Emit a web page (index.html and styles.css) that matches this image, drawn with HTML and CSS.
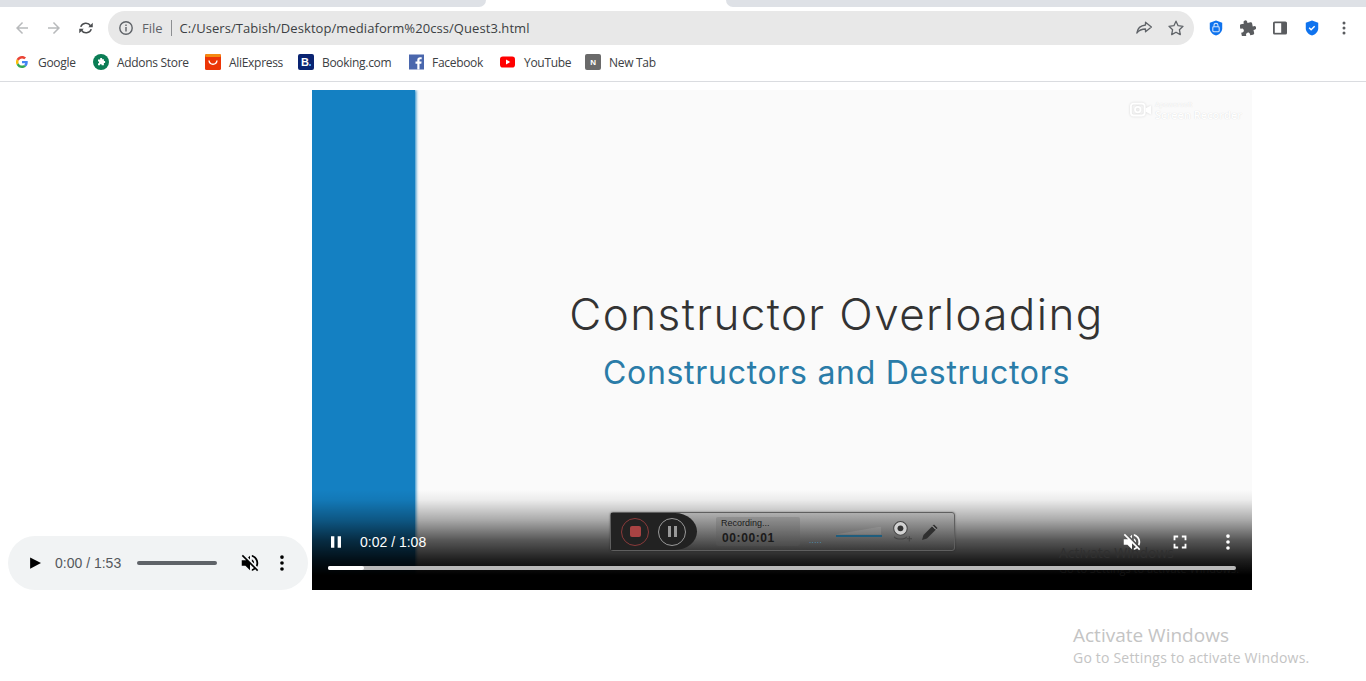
FILE: index.html
```html
<!DOCTYPE html>
<html lang="en-us">
<head>
  <meta charset="utf-8">
  <title>Quest3</title>
  <link rel="stylesheet" href="styles.css">
</head>
<body>
  <!-- browser chrome -->
  <div class="tabstrip">
    <div class="tab-side tab-left"></div>
    <div class="tab-active"></div>
    <div class="tab-side tab-right"></div>
  </div>

  <div class="toolbar">
    <svg class="nav-icon" viewBox="0 0 24 24"><path fill="#b8babc" d="M20 11H7.830l5.590-5.590L12 4l-8 8 8 8 1.410-1.410L7.830 13H20v-2z"/></svg>
    <svg class="nav-icon" viewBox="0 0 24 24"><path fill="#b8babc" d="M4 11h12.170l-5.590-5.590L12 4l8 8-8 8-1.410-1.410L16.170 13H4v-2z"/></svg>
    <svg class="nav-icon" viewBox="0 0 24 24"><path fill="none" stroke="#4a4c4f" stroke-width="2" d="M5 10.500A7.200 7.200 0 0 1 18 9M19 13.500A7.200 7.200 0 0 1 6 15"/><path fill="#4a4c4f" d="M21 5v6h-6zM3 19v-6h6z"/></svg>

    <div class="omnibox">
      <svg class="info-icon" viewBox="0 0 16 16"><circle cx="8" cy="8" r="6.200" fill="none" stroke="#5f6368" stroke-width="1.400"/><path fill="#5f6368" d="M7.300 7h1.400v4.400H7.300zM7.300 4.600h1.400V6H7.300z"/></svg>
      <span class="scheme">File</span>
      <span class="divider"></span>
      <span class="url">C:/Users/Tabish/Desktop/mediaform%20css/Quest3.html</span>
      <svg class="omni-icon" viewBox="0 0 18 18"><path fill="none" stroke="#5f6368" stroke-width="1.300" stroke-linejoin="round" d="M10.500 3.200 16.400 8l-5.900 4.800V10C6.600 10 4 11.200 1.800 14c.6-4 3.400-7.400 8.700-8z"/></svg>
      <svg class="omni-icon" viewBox="0 0 18 18"><path fill="none" stroke="#5f6368" stroke-width="1.300" stroke-linejoin="round" d="m9 2.200 2.100 4.500 4.900.6-3.600 3.400.9 4.900L9 13.200l-4.300 2.400.9-4.900L2 7.300l4.900-.6z"/></svg>
    </div>

    <div class="extensions">
      <svg class="ext-icon" viewBox="0 0 16 18"><path fill="#0f73ee" d="M8 .6 15 3v6.200c0 4-3 6.900-7 8.200-4-1.300-7-4.200-7-8.200V3z"/><rect x="4.400" y="7.600" width="7.200" height="5.600" rx="1" fill="none" stroke="#cfe3fc" stroke-width="1.200"/><path fill="none" stroke="#cfe3fc" stroke-width="1.200" d="M5.800 7.600V6a2.200 2.200 0 0 1 4.400 0v1.600"/></svg>
      <svg class="ext-icon" viewBox="1.500 1 21.500 21.500"><path fill="#5a5c5f" transform="rotate(-12 12 12)" d="M20.500 11H19V7c0-1.100-.9-2-2-2h-4V3.500a2.500 2.500 0 0 0-5 0V5H4c-1.100 0-1.990.9-1.990 2v3.800H3.500c1.490 0 2.700 1.210 2.700 2.700s-1.210 2.700-2.700 2.700H2V20c0 1.100.9 2 2 2h3.800v-1.500c0-1.490 1.210-2.700 2.700-2.700s2.700 1.210 2.700 2.700V22H17c1.100 0 2-.9 2-2v-4h1.500a2.500 2.500 0 0 0 0-5z"/></svg>
      <svg class="ext-icon" viewBox="0 0 16 16"><rect x="1" y="1.500" width="14" height="13" rx="1.600" fill="#5a5c5f"/><rect x="2.800" y="3.200" width="6.400" height="9.600" fill="#fff"/></svg>
      <svg class="ext-icon" viewBox="0 0 16 18"><path fill="#0f73ee" d="M8 .6 15 3v6.200c0 4-3 6.900-7 8.200-4-1.300-7-4.200-7-8.200V3z"/><path fill="none" stroke="#fff" stroke-width="1.600" d="m4.800 8.800 2.200 2.200 4-4"/></svg>
      <svg class="ext-icon" viewBox="0 0 16 16"><g fill="#5a5c5f"><circle cx="8" cy="3" r="1.500"/><circle cx="8" cy="8" r="1.500"/><circle cx="8" cy="13" r="1.500"/></g></svg>
    </div>
  </div>

  <div class="bookmarks">
    <a class="bookmark">
      <svg class="fav fav-google" viewBox="0 0 48 48"><path fill="#ea4335" d="M24 9.500c3.500 0 6.700 1.200 9.200 3.600l6.900-6.900C35.900 2.400 30.400 0 24 0 14.600 0 6.500 5.400 2.600 13.200l8 6.200C12.500 13.700 17.800 9.500 24 9.500z"/><path fill="#4285f4" d="M47 24.500c0-1.600-.1-3.100-.4-4.500H24v9h12.900c-.6 3-2.200 5.400-4.700 7.100l7.700 6C44.400 38 47 31.800 47 24.500z"/><path fill="#fbbc05" d="M10.500 28.600A14.500 14.500 0 0 1 10.500 19.400l-8-6.200a24 24 0 0 0 0 21.600z"/><path fill="#34a853" d="M24 48c6.500 0 11.900-2.100 15.900-5.900l-7.700-6c-2.100 1.400-4.900 2.300-8.200 2.300-6.200 0-11.500-4.200-13.400-9.800l-8 6.200C6.500 42.600 14.600 48 24 48z"/></svg>
      Google
    </a>
    <a class="bookmark">
      <svg class="fav" viewBox="0 0 16 16"><circle cx="8" cy="8" r="8" fill="#0b7d55"/><path fill="#fff" d="M7.200 4h1.900v1.300h1.800v1.800h1.200v1.800h-1.200v2.300H8.600v-1H7v1H5V9.300h1V7.500H5V5.500h2.200z"/></svg>
      Addons Store
    </a>
    <a class="bookmark">
      <svg class="fav" viewBox="0 0 16 16"><rect width="16" height="16" rx="1.500" fill="#ec3507"/><rect width="16" height="3" rx="1.500" fill="#f58a12"/><path fill="none" stroke="#fff" stroke-width="1.400" d="M4 6.500c.6 5 7.400 5 8 0"/></svg>
      AliExpress
    </a>
    <a class="bookmark">
      <span class="fav fav-booking">B<i class="fav-booking-dot"></i></span>
      Booking.com
    </a>
    <a class="bookmark">
      <svg class="fav" viewBox="0 0 16 16"><rect x="1" y=".5" width="15" height="15" fill="#4a67ad"/><path fill="#fff" d="M11.500 15.500V9.800h1.800l.3-2.200h-2.100V6.300c0-.6.200-1 1.100-1h1.100v-2c-.3 0-.9-.1-1.600-.1-1.700 0-2.800 1-2.800 2.800v1.600H7.500v2.200h1.800v5.700z"/></svg>
      Facebook
    </a>
    <a class="bookmark">
      <svg class="fav" viewBox="0 0 16 16"><rect y="2.500" width="15" height="11" rx="2.800" fill="#f00"/><path fill="#fff" d="M6 5.500v5L10.300 8z"/></svg>
      YouTube
    </a>
    <a class="bookmark">
      <span class="fav fav-newtab">N</span>
      New Tab
    </a>
  </div>

  <!-- page -->
  <main class="page">
    <div class="audio-player">
      <svg class="ctl-play" viewBox="0 0 24 24"><path fill="#000" d="M5.500 4.500v15L20 12z"/></svg>
      <span class="audio-time">0:00 / 1:53</span>
      <span class="audio-track"></span>
      <svg class="ctl-icon audio-mute" viewBox="0 0 24 24"><path fill="#000" d="M16.500 12c0-1.770-1.020-3.290-2.500-4.030v2.210l2.450 2.450c.03-.2.050-.41.050-.63zm2.500 0c0 .94-.2 1.820-.54 2.640l1.510 1.510C20.630 14.910 21 13.500 21 12c0-4.280-2.990-7.860-7-8.770v2.060c2.890.86 5 3.540 5 6.710zM4.270 3 3 4.270 7.730 9H3v6h4l5 5v-6.730l4.250 4.250c-.67.52-1.420.93-2.250 1.180v2.060c1.380-.31 2.630-.95 3.690-1.810L19.730 21 21 19.730l-9-9L4.270 3zM12 4 9.910 6.090 12 8.180V4z"/></svg>
      <svg class="ctl-icon audio-more" viewBox="0 0 24 24"><g fill="#000"><circle cx="12" cy="5.500" r="2"/><circle cx="12" cy="12" r="2"/><circle cx="12" cy="18.500" r="2"/></g></svg>
    </div>

    <div class="video-player">
      <div class="slide">
        <div class="slide-band"></div>
        <div class="slide-body">
          <h1 class="slide-title">Constructor Overloading</h1>
          <h2 class="slide-sub">Constructors and Destructors</h2>
        </div>
      </div>

      <div class="rec-mark">
        <svg class="rec-mark-icon" viewBox="0 0 24 20"><rect x="1" y="3" width="15" height="13" rx="3" fill="none" stroke="#fff" stroke-width="2"/><circle cx="8.500" cy="9.500" r="3" fill="none" stroke="#fff" stroke-width="2"/><path fill="#fff" d="m17 8 6-3v10l-6-3z"/></svg>
        <div class="rec-mark-text"><span>Apowersoft</span><b>Screen Recorder</b></div>
      </div>

      <div class="video-shade"></div>

      <div class="recorder">
        <div class="rec-buttons">
          <span class="rec-btn rec-stop"><i></i></span>
          <span class="rec-btn rec-pause"><i></i><i></i></span>
        </div>
        <div class="rec-status">
          <span class="rec-label">Recording...</span>
          <span class="rec-clock">00:00:01</span>
        </div>
        <span class="rec-dots">.....</span>
        <span class="rec-level"></span>
        <svg class="rec-cam" viewBox="0 0 20 22"><circle cx="9" cy="8" r="6.500" fill="#d2d2d2" stroke="#444" stroke-width="1"/><circle cx="9" cy="8" r="2.800" fill="#333"/><path fill="none" stroke="#444" d="M3 16c2 3 10 3 12 0"/><path stroke="#444" d="M15 18h5M17.500 15.500v5"/></svg>
        <svg class="rec-pen" viewBox="0 0 20 20"><path fill="#2f2f2f" d="M14 2.500 17.500 6 7 16.500 2 18l1.500-5z"/><path stroke="#ccc" d="m12.500 4 3.500 3.500"/></svg>
      </div>

      <div class="ghost-text"><span>Activate Windows</span><small>Go to Settings to activate Windows.</small></div>

      <div class="video-controls">
        <div class="video-row">
          <svg class="ctl-icon video-pause" viewBox="0 0 24 24"><path fill="#fff" d="M6 19h4V5H6zm8-14v14h4V5z"/></svg>
          <span class="video-time">0:02 / 1:08</span>
          <svg class="ctl-icon video-mute" viewBox="0 0 24 24"><path fill="#fff" d="M16.500 12c0-1.770-1.020-3.290-2.500-4.030v2.210l2.450 2.450c.03-.2.050-.41.050-.63zm2.500 0c0 .94-.2 1.820-.54 2.640l1.510 1.510C20.630 14.910 21 13.500 21 12c0-4.280-2.990-7.860-7-8.770v2.060c2.890.86 5 3.540 5 6.710zM4.270 3 3 4.270 7.730 9H3v6h4l5 5v-6.730l4.250 4.250c-.67.52-1.420.93-2.250 1.180v2.060c1.380-.31 2.630-.95 3.690-1.810L19.730 21 21 19.730l-9-9L4.270 3zM12 4 9.910 6.090 12 8.180V4z"/></svg>
          <svg class="ctl-icon video-full" viewBox="0 0 24 24"><path fill="#fff" d="M7 14H5v5h5v-2H7v-3zm-2-4h2V7h3V5H5v5zm12 7h-3v2h5v-5h-2v3zM14 5v2h3v3h2V5h-5z"/></svg>
          <svg class="ctl-icon video-more" viewBox="0 0 24 24"><g fill="#fff"><circle cx="12" cy="5.500" r="2"/><circle cx="12" cy="12" r="2"/><circle cx="12" cy="18.500" r="2"/></g></svg>
        </div>
        <div class="video-track"><span class="video-played" style="width:4%"></span></div>
      </div>
    </div>
  </main>

  <div class="watermark">
    <div class="watermark-title">Activate Windows</div>
    <div class="watermark-sub">Go to Settings to activate Windows.</div>
  </div>
</body>
</html>
```

FILE: styles.css
```css
* {
  box-sizing: border-box;
}

html, body {
  height: 100%;
}

body {
  margin: 0;
  background: #fff;
  overflow: hidden;
  position: relative;
  font-family: "Open Sans", "Liberation Sans", sans-serif;
}

/* tabs */
.tabstrip {
  display: flex;
  height: 7px;
  background: #fff;
}

.tab-side {
  background: #dee1e6;
}

.tab-left {
  width: 486px;
  border-bottom-right-radius: 8px;
}

.tab-active {
  width: 240px;
}

.tab-right {
  flex: 1;
  border-bottom-left-radius: 8px;
}

/* toolbar */
.toolbar {
  display: flex;
  align-items: center;
  height: 40px;
  padding-left: 8px;
}

.nav-icon {
  width: 18px;
  height: 18px;
  margin: 2px 6px 0 5px;
  flex: none;
}

.nav-icon + .nav-icon {
  margin-left: 8px;
}

.nav-icon + .nav-icon + .nav-icon {
  margin-right: 0;
}

.omnibox {
  display: flex;
  align-items: center;
  flex: none;
  width: 1086px;
  height: 34px;
  margin-left: 13px;
  margin-top: 2px;
  padding: 0 9px 0 10px;
  border-radius: 17px;
  background: #e8e8e8;
  font-size: 13px;
}

.info-icon {
  width: 16px;
  height: 16px;
}

.scheme {
  margin-left: 8px;
  color: #5f6368;
}

.divider {
  width: 1px;
  height: 16px;
  margin: 0 8px;
  background: #8d8f92;
}

.url {
  flex: 1;
  color: #3c3f43;
  letter-spacing: .07px;
}

.omni-icon {
  width: 18px;
  height: 18px;
  margin-left: 14px;
}

.extensions {
  display: flex;
  align-items: center;
  margin-left: 14px;
  margin-top: 2px;
}

.ext-icon {
  flex: none;
  width: 16px;
  height: 16px;
  margin-right: 16px;
}

/* bookmarks */
.bookmarks {
  display: flex;
  align-items: center;
  height: 35px;
  padding: 0 0 4px 14px;
  border-bottom: 1px solid #dadce0;
}

.bookmark {
  display: flex;
  align-items: center;
  gap: 8px;
  font-size: 12px;
  letter-spacing: -.3px;
  white-space: nowrap;
  color: #3c4043;
}

.bookmark:nth-child(1) { width: 79px; }
.bookmark:nth-child(2) { width: 112px; }
.bookmark:nth-child(3) { width: 93px; }
.bookmark:nth-child(4) { width: 110px; }
.bookmark:nth-child(5) { width: 92px; }
.bookmark:nth-child(6) { width: 85px; }

.fav {
  width: 16px;
  height: 16px;
  flex: none;
}

.fav-google {
  padding: 2px;
}

.fav-booking {
  position: relative;
  display: flex;
  align-items: center;
  padding-left: 3px;
  border-radius: 2px;
  background: #0a2472;
  color: #fff;
  font: bold 11px "Liberation Sans", sans-serif;
}

.fav-booking-dot {
  position: absolute;
  right: 3px;
  bottom: 4px;
  width: 2px;
  height: 2px;
  background: #4aa3f0;
}

.fav-newtab {
  display: flex;
  align-items: center;
  justify-content: center;
  border-radius: 2px;
  background: #6a6a6a;
  color: #fff;
  font: bold 8px "Liberation Sans", sans-serif;
}

/* page */
.page {
  display: flex;
  align-items: flex-end;
  gap: 4px;
  padding: 8px;
}

.audio-player {
  display: flex;
  align-items: center;
  width: 300px;
  height: 54px;
  padding-left: 18px;
  border-radius: 27px;
  background: #f1f3f4;
  font: 14px "Liberation Sans", sans-serif;
  color: #55585c;
}

.ctl-play {
  width: 18px;
  height: 18px;
}

.audio-time {
  margin-left: 11px;
  width: 66px;
  white-space: nowrap;
}

.audio-track {
  width: 80px;
  height: 4px;
  margin-left: 16px;
  border-radius: 2px;
  background: #5f6368;
}

.ctl-icon {
  width: 22px;
  height: 22px;
  flex: none;
}

.audio-mute {
  margin-left: 22px;
}

.audio-more {
  margin-left: 10px;
}

.video-player {
  position: relative;
  width: 940px;
  height: 500px;
  overflow: hidden;
  background: #000;
}

.slide {
  display: flex;
  height: 100%;
  background: #fafafa;
}

.slide-band {
  width: 103px;
  background: #1480c2;
  box-shadow: 1px 0 3px #1480c2;
}

.slide-body {
  flex: 1;
  padding: 199px 0 0 6px;
  text-align: center;
}

.slide-title {
  margin: 0;
  font: 300 44px/50px Inter, sans-serif;
  letter-spacing: 1.400px;
  color: #333;
  white-space: nowrap;
}

.slide-sub {
  margin: 14px 0 0;
  font: 400 32px/40px Inter, sans-serif;
  letter-spacing: .7px;
  color: #2a7ca8;
  white-space: nowrap;
}

.rec-mark {
  position: absolute;
  top: 10px;
  right: 10px;
  display: flex;
  align-items: center;
  gap: 3px;
  color: #fff;
  text-shadow: 0 0 1px #d5d5d5;
}

.rec-mark-icon {
  width: 22px;
  height: 20px;
  filter: drop-shadow(0 0 1px #d5d5d5);
}

.rec-mark-text {
  display: flex;
  flex-direction: column;
  font-size: 7px;
  line-height: 8px;
}

.rec-mark-text b {
  font-size: 11px;
  line-height: 11px;
  font-weight: 600;
}

.video-shade {
  position: absolute;
  left: 0;
  right: 0;
  bottom: 0;
  height: 100px;
  background: linear-gradient(rgba(0, 0, 0, 0), rgba(0, 0, 0, .06) 10%, rgba(0, 0, 0, .32) 30%, rgba(0, 0, 0, .65) 50%, rgba(0, 0, 0, .88) 70%, #000 85%);
}

.recorder {
  position: absolute;
  left: 298px;
  top: 422px;
  display: flex;
  align-items: center;
  width: 345px;
  height: 39px;
  border-radius: 3px;
  border: 1px solid #5f5f5f;
  box-shadow: 0 0 2px rgba(0, 0, 0, .4);
  background: linear-gradient(#b0b0b0, #3a3a3a);
  font-family: "Liberation Sans", sans-serif;
}

.rec-buttons {
  display: flex;
  align-items: center;
  gap: 9px;
  width: 86px;
  height: 100%;
  padding-left: 10px;
  background: #222;
  border-radius: 0 22px 22px 0 / 0 50% 50% 0;
}

.rec-btn {
  display: flex;
  align-items: center;
  justify-content: center;
  gap: 3px;
  width: 28px;
  height: 28px;
  border-radius: 50%;
}

.rec-stop {
  border: 1px solid #8a3a3a;
}

.rec-stop i {
  width: 11px;
  height: 11px;
  border-radius: 2px;
  background: #a84343;
}

.rec-pause {
  border: 1px solid #999;
}

.rec-pause i {
  width: 3px;
  height: 11px;
  background: #999;
}

.rec-status {
  display: flex;
  flex-direction: column;
  width: 84px;
  height: 29px;
  margin-left: 19px;
  padding-left: 5px;
  background: rgba(90, 90, 90, .25);
  border-radius: 2px;
  color: #1a1a1a;
}

.rec-label {
  font-size: 9px;
  line-height: 13px;
}

.rec-clock {
  padding-left: 1px;
  font-size: 12px;
  line-height: 16px;
  font-weight: bold;
  letter-spacing: .6px;
}

.rec-dots {
  align-self: flex-end;
  width: 27px;
  height: 14px;
  margin-left: 9px;
  font-size: 8px;
  line-height: 10px;
  letter-spacing: .4px;
  color: #4a9cc6;
}

.rec-level {
  position: relative;
  width: 46px;
  height: 2px;
  margin-top: 8px;
  border-right: 1px solid #1f5d7d;
  background: #1f5d7d;
}

.rec-level::before {
  content: "";
  position: absolute;
  right: 0;
  bottom: 2px;
  width: 46px;
  height: 8px;
  background: rgba(200, 200, 200, .16);
  clip-path: polygon(0 100%, 100% 0, 100% 100%);
}

.rec-cam {
  width: 21px;
  height: 23px;
  margin-left: 9px;
}

.rec-pen {
  width: 20px;
  height: 20px;
  margin-left: 8px;
}

.ghost-text {
  position: absolute;
  left: 747px;
  top: 453px;
  display: flex;
  flex-direction: column;
  font-size: 14px;
  line-height: 19px;
  color: #303030;
}

.ghost-text small {
  font-size: 11px;
  line-height: 14px;
  color: #141414;
}

.video-controls {
  position: absolute;
  left: 16px;
  right: 16px;
  bottom: 20px;
}

.video-row {
  display: flex;
  align-items: center;
  height: 22px;
  margin-bottom: 13px;
  font: 14px "Liberation Sans", sans-serif;
  color: #fff;
}

.video-pause {
  width: 20px;
  height: 20px;
  margin-left: -2px;
}

.video-time {
  margin-left: 14px;
  white-space: nowrap;
}

.video-mute {
  margin-left: auto;
  margin-right: 26px;
}

.video-full {
  margin-right: 26px;
}

.video-more {
  margin-right: -3px;
}

.video-track {
  height: 4px;
  border-radius: 2px;
  background: #b9b9b9;
}

.video-played {
  display: block;
  height: 100%;
  border-radius: 2px;
  background: #fff;
}

/* windows watermark */
.watermark {
  position: absolute;
  left: 1073px;
  top: 622px;
  color: #c4c4c4;
}

.watermark-title {
  font-size: 19px;
  line-height: 26px;
}

.watermark-sub {
  font-size: 14px;
  line-height: 19px;
  letter-spacing: .2px;
}
```
